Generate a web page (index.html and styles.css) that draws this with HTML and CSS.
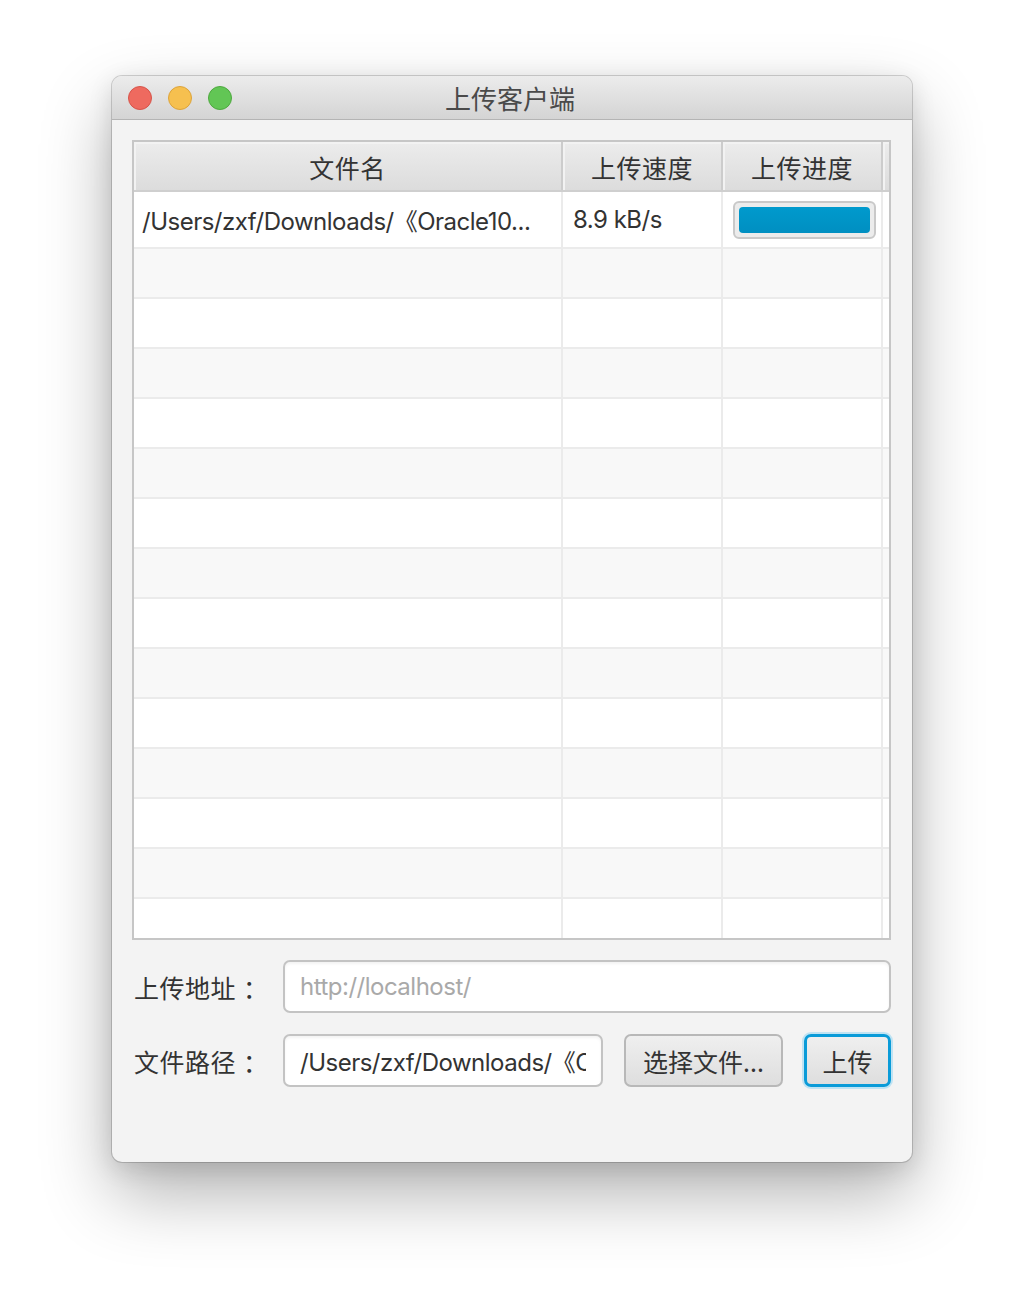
FILE: index.html
```html
<!DOCTYPE html>
<html lang="zh">
<head>
<meta charset="utf-8">
<title>上传客户端</title>
<link rel="stylesheet" href="styles.css">
</head>
<body>
<div class="window">
  <div class="titlebar">
    <div class="lights">
      <span class="light red"></span>
      <span class="light yellow"></span>
      <span class="light green"></span>
    </div>
    <div class="title">上传客户端</div>
  </div>
  <div class="content">
    <div class="table">
      <div class="thead">
        <div class="th">文件名</div>
        <div class="th">上传速度</div>
        <div class="th">上传进度</div>
        <div class="th filler"></div>
      </div>
      <div class="tbody">
        <div class="tr first">
          <div class="td">/Users/zxf/Downloads/《Oracle10...</div>
          <div class="td speed">8.9 kB/s</div>
          <div class="td"><div class="progress"><div class="bar"></div></div></div>
          <div class="td filler"></div>
        </div>
        <div class="tr odd"><div class="td"></div><div class="td"></div><div class="td"></div><div class="td filler"></div></div>
        <div class="tr"><div class="td"></div><div class="td"></div><div class="td"></div><div class="td filler"></div></div>
        <div class="tr odd"><div class="td"></div><div class="td"></div><div class="td"></div><div class="td filler"></div></div>
        <div class="tr"><div class="td"></div><div class="td"></div><div class="td"></div><div class="td filler"></div></div>
        <div class="tr odd"><div class="td"></div><div class="td"></div><div class="td"></div><div class="td filler"></div></div>
        <div class="tr"><div class="td"></div><div class="td"></div><div class="td"></div><div class="td filler"></div></div>
        <div class="tr odd"><div class="td"></div><div class="td"></div><div class="td"></div><div class="td filler"></div></div>
        <div class="tr"><div class="td"></div><div class="td"></div><div class="td"></div><div class="td filler"></div></div>
        <div class="tr odd"><div class="td"></div><div class="td"></div><div class="td"></div><div class="td filler"></div></div>
        <div class="tr"><div class="td"></div><div class="td"></div><div class="td"></div><div class="td filler"></div></div>
        <div class="tr odd"><div class="td"></div><div class="td"></div><div class="td"></div><div class="td filler"></div></div>
        <div class="tr"><div class="td"></div><div class="td"></div><div class="td"></div><div class="td filler"></div></div>
        <div class="tr odd"><div class="td"></div><div class="td"></div><div class="td"></div><div class="td filler"></div></div>
        <div class="tr"><div class="td"></div><div class="td"></div><div class="td"></div><div class="td filler"></div></div>
      </div>
    </div>
    <div class="form">
      <div class="form-row">
        <label class="label">上传地址<span class="colon">：</span></label>
        <div class="input wide placeholder">http://localhost/</div>
      </div>
      <div class="form-row">
        <label class="label">文件路径<span class="colon">：</span></label>
        <div class="input path"><span class="path-text">/Users/zxf/Downloads/《Oracle10g.pdf</span></div>
        <button class="btn choose">选择文件...</button>
        <button class="btn upload">上传</button>
      </div>
    </div>
  </div>
</div>
</body>
</html>
```

FILE: styles.css
```css
* { box-sizing: border-box; }

html, body {
  margin: 0;
  padding: 0;
  background: #ffffff;
}

body {
  min-height: 1310px;
  padding: 76px 112px 148px 112px;
  font-family: "Inter", "Noto Sans CJK SC", sans-serif;
  color: #333333;
}

.window {
  width: 800px;
  height: 1086px;
  background: #f3f3f3;
  border-radius: 10px;
  overflow: hidden;
  box-shadow: 0 0 0 1px rgba(0,0,0,0.16), 0 32px 70px rgba(0,0,0,0.30), 0 6px 24px rgba(0,0,0,0.12);
  display: flex;
  flex-direction: column;
}

.titlebar {
  height: 44px;
  flex: none;
  background: linear-gradient(#ececec, #d4d4d4);
  border-bottom: 1px solid #b4b4b4;
  position: relative;
  display: flex;
  align-items: center;
  justify-content: center;
}

.lights {
  position: absolute;
  left: 16px;
  top: 10px;
  display: flex;
  gap: 16px;
}

.light {
  width: 24px;
  height: 24px;
  border-radius: 50%;
  display: block;
}
.light.red { background: #ee6a5f; border: 1px solid #d6544a; }
.light.yellow { background: #f6c04f; border: 1px solid #dca33b; }
.light.green { background: #62c655; border: 1px solid #4ea83f; }

.title {
  font-family: "Noto Sans CJK SC", sans-serif;
  font-size: 26px;
  color: #4a4a4a;
  line-height: 44px;
  margin-left: -4px;
}

.content {
  flex: 1;
  padding: 20px 21px 0 20px;
  display: flex;
  flex-direction: column;
}

.table {
  height: 800px;
  flex: none;
  border: 2px solid #c6c6c6;
  background: #ffffff;
  display: flex;
  flex-direction: column;
  overflow: hidden;
}

.thead {
  height: 50px;
  flex: none;
  display: grid;
  grid-template-columns: 429px 160px 160px 6px;
  border-bottom: 2px solid #cfcfcf;
}

.th {
  background: linear-gradient(#ececec, #dcdcdc);
  border-right: 2px solid #cccccc;
  box-shadow: inset 2px 2px 0 #f2f2f2;
  font-family: "Noto Sans CJK SC", sans-serif;
  font-size: 25px;
  color: #333333;
  display: flex;
  align-items: center;
  justify-content: center;
  padding-top: 2px;
  letter-spacing: 0.5px;
}

.th.filler { border-right: none; }

.tbody {
  flex: 1;
  overflow: hidden;
}

.tr {
  height: 50px;
  display: grid;
  grid-template-columns: 429px 160px 160px 6px;
  border-bottom: 2px solid #ebebeb;
  background: #ffffff;
}
.tr.odd { background: #f8f8f8; }
.tr.first { height: 57px; }

.td {
  border-right: 2px solid #ebebeb;
  font-size: 24px;
  display: flex;
  align-items: center;
  padding: 0 0 0 8px;
  white-space: nowrap;
  overflow: hidden;
  color: #333333;
  font-family: "Inter", "Noto Sans CJK SC", sans-serif;
  letter-spacing: -0.5px;
}
.td.speed { padding-left: 10px; }
.td.filler { border-right: none; padding: 0; }

.progress {
  flex: none;
  width: 143px;
  height: 38px;
  margin-left: 2px;
  border: 2px solid #c9c9c9;
  border-radius: 6px;
  background: #ececec;
  padding: 4px;
}
.bar {
  width: 100%;
  height: 100%;
  border-radius: 4px;
  background: linear-gradient(#009acd, #008fc1);
}

.form {
  display: flex;
  flex-direction: column;
  gap: 21px;
  margin-top: 20px;
}

.form-row {
  display: flex;
  align-items: center;
  height: 53px;
  gap: 21px;
}

.label {
  width: 151px;
  flex: none;
  margin-right: -21px;
  padding-left: 2px;
  font-family: "Noto Sans CJK SC", sans-serif;
  font-size: 25px;
  color: #333333;
  white-space: nowrap;
  letter-spacing: 0.5px;
}
.colon {
  display: inline-block;
  margin-left: 7px;
}

.input {
  flex: none;
  height: 53px;
  border: 2px solid #c3c3c3;
  border-radius: 7px;
  background: #ffffff;
  box-shadow: inset 0 2px 3px rgba(0,0,0,0.05);
  font-family: "Inter", "Noto Sans CJK SC", sans-serif;
  font-size: 24px;
  letter-spacing: -0.5px;
  display: flex;
  align-items: center;
  padding: 0 15px;
  white-space: nowrap;
  overflow: hidden;
}
.input.wide { width: 608px; }
.input.placeholder { color: #a9a9a9; }
.input.path { width: 320px; color: #333333; }
.path-text { display: block; width: 100%; overflow: hidden; }

.btn {
  flex: none;
  height: 53px;
  border: 2px solid #b8b8b8;
  border-radius: 7px;
  background: linear-gradient(#efefef, #dedede);
  font-family: "Noto Sans CJK SC", sans-serif;
  font-size: 25px;
  color: #333333;
  padding: 0;
  white-space: nowrap;
}
.btn.choose { width: 159px; }
.btn.upload {
  width: 87px;
  border: 3px solid #0a9bd8;
  box-shadow: 0 0 0 2px #bfe3f3;
}
```
